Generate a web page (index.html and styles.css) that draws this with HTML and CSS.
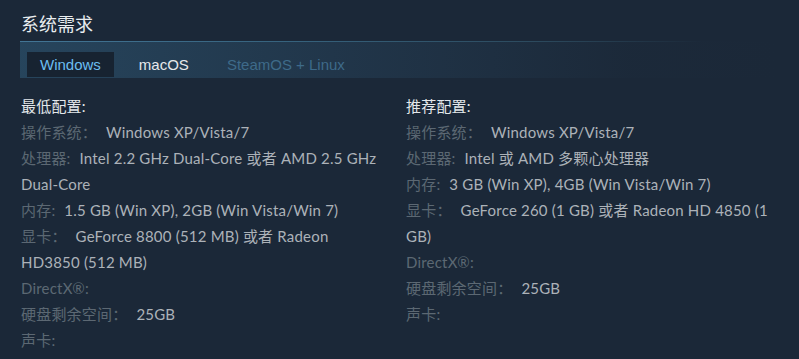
FILE: index.html
```html
<!DOCTYPE html>
<html lang="zh-CN">
<head>
<meta charset="utf-8">
<title>系统需求</title>
<link rel="stylesheet" href="styles.css">
</head>
<body>
<div class="sysreq">
  <h2 class="title">系统需求</h2>
  <div class="tabs">
    <span class="tab active">Windows</span>
    <span class="tab">macOS</span>
    <span class="tab dim">SteamOS + Linux</span>
  </div>
  <div class="cols">
    <ul class="col">
      <li class="head">最低配置:</li>
      <li><span class="k">操作系统：</span>Windows XP/Vista/7</li>
      <li><span class="k">处理器:</span>Intel 2.2 GHz Dual-Core 或者 AMD 2.5 GHz Dual-Core</li>
      <li><span class="k">内存:</span>1.5 GB (Win XP), 2GB (Win Vista/Win 7)</li>
      <li><span class="k">显卡：</span>GeForce 8800 (512 MB) 或者 Radeon HD3850 (512 MB)</li>
      <li><span class="k">DirectX®:</span></li>
      <li><span class="k">硬盘剩余空间：</span>25GB</li>
      <li><span class="k">声卡:</span></li>
    </ul>
    <ul class="col">
      <li class="head">推荐配置:</li>
      <li><span class="k">操作系统：</span>Windows XP/Vista/7</li>
      <li><span class="k">处理器:</span>Intel 或 AMD 多颗心处理器</li>
      <li><span class="k">内存:</span>3 GB (Win XP), 4GB (Win Vista/Win 7)</li>
      <li><span class="k">显卡：</span>GeForce 260 (1 GB) 或者 Radeon HD 4850 (1 GB)</li>
      <li><span class="k">DirectX®:</span></li>
      <li><span class="k">硬盘剩余空间：</span>25GB</li>
      <li><span class="k">声卡:</span></li>
    </ul>
  </div>
</div>
</body>
</html>
```

FILE: styles.css
```css
html, body {
  margin: 0;
  padding: 0;
  background: #1b2838;
}

.sysreq {
  padding: 0 20px 0 20px;
  font-family: "Lato", "Noto Sans CJK SC", sans-serif;
  font-size: 15px;
  color: #acb2b8;
}

.title {
  margin: 13px 0 0 1px;
  padding-bottom: 4px;
  font-family: "Liberation Sans", "Noto Sans CJK SC", sans-serif;
  font-size: 18px;
  line-height: 24px;
  font-weight: normal;
  color: #e9edf0;
}

.tabs {
  position: relative;
  display: flex;
  gap: 12px;
  padding: 11px 0 1px 7px;
  background: linear-gradient(to right, rgba(48, 92, 122, 0.55) 0%, rgba(40, 70, 95, 0.42) 45%, rgba(30, 48, 66, 0.15) 80%, rgba(27, 40, 56, 0) 100%);
}

.tabs::before {
  content: "";
  position: absolute;
  left: 0;
  top: 0;
  width: 90%;
  height: 1px;
  background: linear-gradient(to right, #427595 0%, #36627d 40%, #2c4a5e 75%, rgba(27, 40, 56, 0) 100%);
}

.tab {
  display: block;
  padding: 0 13px;
  height: 25px;
  line-height: 25px;
  font-family: "Liberation Sans", Arial, sans-serif;
  font-size: 15px;
  color: #e6e9ec;
}

.tab.active {
  background: #172331;
  color: #6cbdf0;
}

.tab.dim {
  color: #3e6a89;
}

.cols {
  display: grid;
  grid-template-columns: 360px 1fr;
  column-gap: 25px;
  margin-top: 15px;
  letter-spacing: 0.2px;
}

.col {
  list-style: none;
  margin: 0;
  padding: 0 0 0 1px;
}

.col li {
  line-height: 26px;
}

.col .head {
  color: #e4e8eb;
}

.k {
  color: #5c6873;
  margin-right: 9px;
}
```
